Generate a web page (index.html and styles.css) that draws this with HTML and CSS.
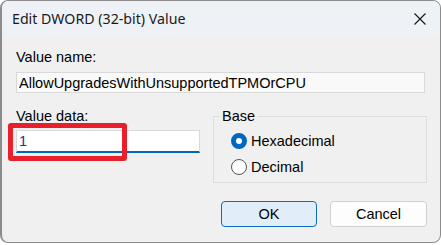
FILE: index.html
```html
<!DOCTYPE html>
<html lang="en">

<head>
    <meta charset="UTF-8" />
    <meta name="viewport" content="width=device-width, initial-scale=1.0" />
    <title>Edit DWORD (32-bit) Value</title>
    <link rel="stylesheet" href="styles.css">
</head>

<body>
    <div class="window">
        <header class="titlebar">
            <span class="title">Edit DWORD (32-bit) Value</span>
            <svg class="close" width="12" height="12" viewBox="0 0 12 12">
                <path d="M0.5 0.5 L11.5 11.5 M11.5 0.5 L0.5 11.5" stroke="#1a1a1a" stroke-width="1.2" fill="none" />
            </svg>
        </header>

        <main class="content">
            <label class="label" for="name">Value name:</label>
            <input class="field name" id="name" type="text" value="AllowUpgradesWithUnsupportedTPMOrCPU" readonly />

            <div class="row">
                <div class="data">
                    <label class="label" for="data">Value data:</label>
                    <div class="data-wrap">
                        <input class="field value" id="data" type="text" value="1" />
                        <span class="highlight"></span>
                    </div>
                </div>

                <fieldset class="base">
                    <legend>Base</legend>
                    <label class="radio"><span class="dot checked"></span>Hexadecimal</label>
                    <label class="radio"><span class="dot"></span>Decimal</label>
                </fieldset>
            </div>

            <div class="buttons">
                <button class="btn primary">OK</button>
                <button class="btn">Cancel</button>
            </div>
        </main>
    </div>
</body>

</html>
```

FILE: styles.css
```css
* {
    margin: 0;
    padding: 0;
    box-sizing: border-box;
}

body {
    background: #ffffff;
    font-family: 'Liberation Sans', Arial, sans-serif;
    font-size: 14.5px;
    color: #000;
}

.window {
    width: 441px;
    height: 243px;
    border: 1px solid #8c8c8c;
    border-left-width: 2px;
    border-radius: 8px;
    background: #f0f0f0;
    overflow: hidden;
}

.titlebar {
    height: 35px;
    background: #eef2f7;
    display: flex;
    align-items: center;
    justify-content: space-between;
    padding: 0 14px 0 10px;
}

.title {
    font-family: 'Noto Sans', sans-serif;
    font-size: 14.2px;
    color: #1a1a1a;
}

.content {
    padding: 13px 13px 0 14px;
}

.label {
    display: block;
    line-height: 17px;
}

.field {
    display: block;
    font-family: 'Liberation Sans', Arial, sans-serif;
    font-size: 14.5px;
    background: #fff;
    border: 1px solid #d9d9d9;
    outline: none;
    color: #000;
}

.name {
    width: 409px;
    height: 21px;
    margin-top: 6px;
    padding: 0 2px;
    background: #f9f9f9;
}

.row {
    display: flex;
    gap: 13px;
    margin-top: 15px;
}

.data {
    width: 184px;
}

.data .label {
    margin-bottom: 5px;
}

.data-wrap {
    position: relative;
}

.value {
    width: 184px;
    height: 23px;
    padding: 0 2px;
    border-bottom: 2px solid #0067c0;
    color: #0b3b8c;
}

.highlight {
    position: absolute;
    left: -8px;
    top: -7px;
    width: 119px;
    height: 38px;
    border: 5px solid #e8202c;
    border-radius: 3px;
}

.base {
    width: 216px;
    height: 75px;
    border: 1px solid #dcdcdc;
    padding: 3px 0 0 0;
}

.base legend {
    padding: 0 2px;
    margin-left: 6px;
    line-height: 17px;
}

.radio {
    display: flex;
    align-items: center;
    gap: 4px;
    height: 26px;
    padding-left: 17px;
}

.dot {
    width: 16px;
    height: 16px;
    border-radius: 50%;
    border: 1px solid #555;
    background: #fff;
}

.dot.checked {
    border: 5px solid #0067c0;
}

.buttons {
    display: flex;
    justify-content: flex-end;
    gap: 13px;
    margin-top: 18px;
}

.btn {
    width: 97px;
    height: 26px;
    font-family: 'Liberation Sans', Arial, sans-serif;
    font-size: 14.5px;
    color: #000;
    background: #fdfdfd;
    border: 1px solid #d0d0d0;
    border-radius: 4px;
}

.btn.primary {
    width: 96px;
    background: #e1eefa;
    border-color: #0a6cc4;
}
```
